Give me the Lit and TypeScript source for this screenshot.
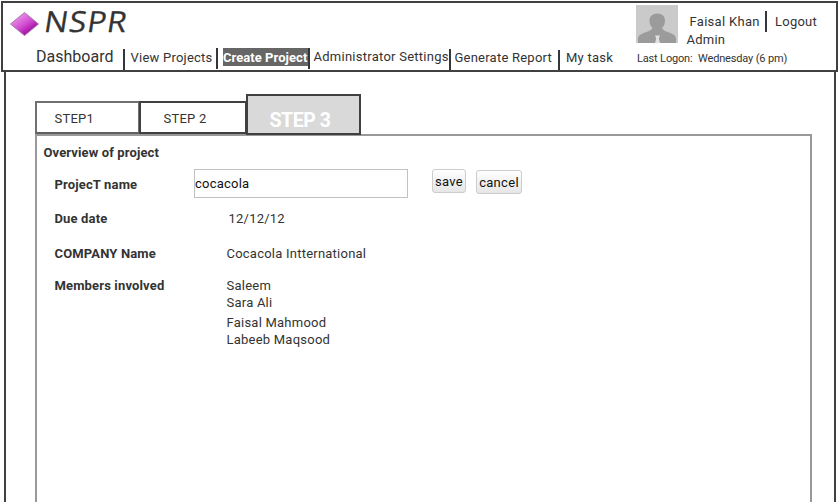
import { LitElement, html, css } from "lit";
import { customElement } from "lit/decorators.js";

@customElement("app-header")
class AppHeader extends LitElement {
  static styles = css`
    :host { display: block; box-sizing: border-box; width: 837px; height: 71px; margin-left: 1px; border: 2px solid #404040; background: #fff; }
    .bar { display: flex; height: 67px; }
    .left { width: 633px; flex: none; }
    .brand { display: flex; height: 44px; }
    .gem { display: block; width: 31px; height: 26px; margin: 8px 0 0 6px; }
    .logo { font: 500 29px/34px "Open Sans", sans-serif; letter-spacing: 1px; margin: 1px 0 0 4px; color: #333; -webkit-text-stroke: 0.3px #333; transform: skewX(-9deg) scaleX(1.08); transform-origin: 0 50%; }
    nav { display: flex; white-space: nowrap; height: 23px; }
    .item { line-height: 16px; flex: none; box-sizing: border-box; }
    .sep { width: 2px; height: 21px; background: #33363b; flex: none; }
    .dash { font-size: 16px; margin-left: 33px; width: 87px; letter-spacing: 0.02px; padding-top: 2px; }
    .view { margin-left: 5.500px; width: 85.500px; padding-top: 3px; }
    .create { margin: 1px 0 0 5px; width: 85px; height: 18px; background: #666; color: #fff; font-weight: 700; padding-top: 2px; letter-spacing: 0.05px; }
    .admin { margin-left: 3.500px; width: 135.500px; padding-top: 2px; letter-spacing: 0.26px; }
    .gen { margin-left: 3.500px; width: 103.500px; padding-top: 3px; }
    .task { margin-left: 6px; padding-top: 3px; }
    .s1, .s4 { margin-top: 2px; }
    .s2, .s3 { margin-top: 1px; }
    .s5 { margin-top: 3px; height: 20px; }
    .user { padding-top: 2px; white-space: nowrap; }
    .who { display: flex; height: 38px; }
    .avatar { display: block; flex: none; }
    .name { line-height: 18px; margin-left: 8.500px; width: 78.500px; padding-top: 8px; }
    .full { margin-left: 3px; letter-spacing: 0.3px; }
    .bar2 { width: 2px; height: 21px; background: #33363b; margin-top: 6px; }
    .out { margin: 9px 0 0 8px; line-height: 16px; }
    .last { display: flex; gap: 5.500px; font-size: 11px; line-height: 14px; letter-spacing: -0.16px; margin: 9px 0 0 1px; }
  `;
  render() {
    return html`<div class="bar">
      <div class="left">
        <div class="brand">
          <svg class="gem" viewBox="0 0 31 26">
            <defs><linearGradient id="g" x1=".25" y1=".2" x2=".75" y2=".8"><stop offset="0" stop-color="#e58be5"/><stop offset=".5" stop-color="#d34fd3"/><stop offset="1" stop-color="#a30fa3"/></linearGradient></defs>
            <path d="M15.5 1.5 29.5 13 15.5 24.5 1.5 13Z" fill="url(#g)" stroke="#a578a8"/>
          </svg>
          <div class="logo">NSPR</div>
        </div>
        <nav>
          <div class="item dash">Dashboard</div><i class="sep s1"></i>
          <div class="item view">View Projects</div><i class="sep s2"></i>
          <div class="item create">Create Project</div><i class="sep s3"></i>
          <div class="item admin">Administrator Settings</div><i class="sep s4"></i>
          <div class="item gen">Generate Report</div><i class="sep s5"></i>
          <div class="item task">My task</div>
        </nav>
      </div>
      <div class="user">
        <div class="who">
          <svg class="avatar" width="42" height="38" viewBox="0 0 42 38">
            <path d="M0 0h42v38H0z" fill="#cacaca"/>
            <path d="M2 38v-4c0-3.500 3-5 7-6.500 4-1.500 7-2.500 7.500-4.500-2-2-3-4.500-3-7.500 0-4 3-7 7.800-7s7.700 3 7.700 7c0 3-1 5.500-3 7.500.5 2 3 3 7 4.500 4 1.500 7 3 7 6.500v4z" fill="#9b9b9b"/>
            <path d="M19 30.500h5l-1.200 3 1.200 4.500h-5l1.200-4.500z" fill="#e0e0e0"/>
          </svg>
          <div class="name"><div class="full">Faisal Khan</div><div>Admin</div></div>
          <i class="bar2"></i>
          <div class="out">Logout</div>
        </div>
        <div class="last"><span>Last Logon:</span><span>Wednesday (6 pm)</span></div>
      </div>
    </div>`;
  }
}

@customElement("project-overview")
class ProjectOverview extends LitElement {
  static styles = css`
    :host { display: block; box-sizing: border-box; width: 777px; height: 380px; border: 2px solid #999; border-bottom: 0; line-height: 16px; }
    .title { font-weight: 700; margin: 9px 0 0 6.500px; letter-spacing: 0.12px; }
    .row { display: flex; margin-left: 17.500px; }
    .label { width: 139.500px; flex: none; font-weight: 700; letter-spacing: 0.15px; }
    .value { margin-left: 32.500px; }
    .name { height: 29px; margin-top: 8px; }
    .name .label { padding-top: 8px; }
    .field { box-sizing: border-box; width: 214px; height: 29px; border: 1px solid #c2c2c2; color: #111; padding: 6px 0 0; }
    .btn { box-sizing: border-box; height: 24px; border: 1px solid #ccc; border-radius: 3px; background: linear-gradient(#fff, #e6e6e6); color: #111; text-align: center; line-height: 23px; white-space: nowrap; letter-spacing: 0.3px; }
    .save { width: 34px; margin-left: 24px; }
    .cancel { width: 46px; margin: 1px 0 0 10px; }
    .due { margin-top: 13px; }
    .due .value { margin-left: 34.500px; }
    .company { margin-top: 19px; }
    .members { margin-top: 16px; }
    .member { height: 17px; }
    .group + .group { margin-top: 3px; }
  `;
  render() {
    const groups = [["Saleem", "Sara Ali"], ["Faisal Mahmood", "Labeeb Maqsood"]];
    return html`
      <div class="title">Overview of project</div>
      <div class="row name"><div class="label">ProjecT name</div><div class="field">cocacola</div><div class="btn save">save</div><div class="btn cancel">cancel</div></div>
      <div class="row due"><div class="label">Due date</div><div class="value">12/12/12</div></div>
      <div class="row company"><div class="label">COMPANY Name</div><div class="value">Cocacola Intternational</div></div>
      <div class="row members"><div class="label">Members involved</div><div class="value">
        ${groups.map((g) => html`<div class="group">${g.map((m) => html`<div class="member">${m}</div>`)}</div>`)}
      </div></div>`;
  }
}

@customElement("app-root")
class AppRoot extends LitElement {
  static styles = css`
    :host { display: block; box-sizing: border-box; width: 840px; height: 502px; padding-top: 1px; overflow: hidden; background: #fff; color: #333; font: 13px/16px Roboto, sans-serif; letter-spacing: 0.23px; }
    .page { box-sizing: border-box; width: 832px; height: 430px; margin-left: 4px; border: solid #404040; border-width: 0 2px; padding: 22px 0 0 29px; }
    .tabs { display: flex; align-items: flex-end; height: 40px; }
    .tab { box-sizing: border-box; height: 33px; border: 2px solid #404040; line-height: 16px; padding-top: 8px; }
    .one { width: 105px; border-color: #707070; border-bottom-color: #606060; padding-left: 17.500px; }
    .two { width: 108px; margin-left: -1px; padding-left: 22.500px; }
    .three { width: 115px; height: 41px; margin: 0 0 -1px -1px; background: #d9d9d9; color: #fff; font-size: 19.500px; line-height: 22px; font-weight: 700; padding: 14px 0 0 21.500px; letter-spacing: -0.45px; position: relative; }
  `;
  render() {
    return html`<app-header></app-header>
      <div class="page">
        <div class="tabs"><div class="tab one">STEP1</div><div class="tab two">STEP 2</div><div class="tab three">STEP 3</div></div>
        <project-overview></project-overview>
      </div>`;
  }
}
